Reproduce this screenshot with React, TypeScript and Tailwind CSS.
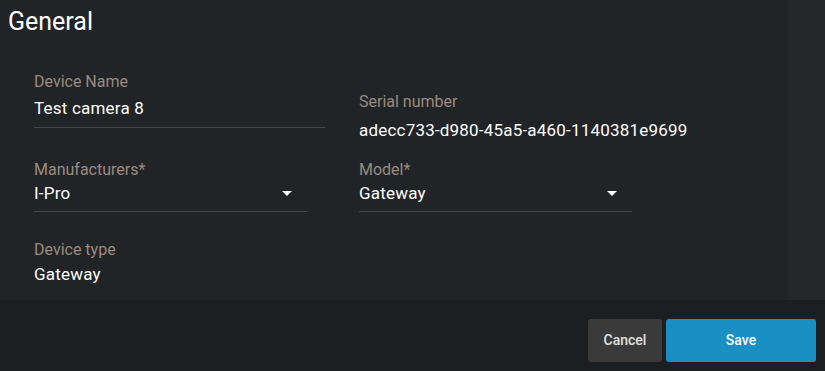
import React from "react";

const Caret = () => (
  <svg width="10" height="5" viewBox="0 0 10 5" className="shrink-0">
    <path d="M0 0 L10 0 L5 5 Z" fill="#ffffff" />
  </svg>
);

const labelCls = "text-[16px] leading-[20px] text-[#9a8a80] h-[20px] whitespace-nowrap";
const valueCls = "text-[17px] leading-[24px] tracking-[0.2px] text-white h-[24px] whitespace-nowrap";

export default function App() {
  return (
    <div
      className="w-[825px] h-[371px] flex flex-col overflow-hidden"
      style={{ fontFamily: "Roboto, 'Liberation Sans', sans-serif" }}
    >
      <div className="h-[300px] flex">
        <div className="flex-1 bg-[#212427] flex flex-col">
          <div className="pl-[8px] pt-[6px] text-[25px] leading-[32px] text-white">General</div>
          <div className="flex pl-[34px]">
            <div className="w-[291px] flex flex-col">
              <div className="mt-[34px] flex flex-col border-b border-[#44474a] pb-[7px]">
                <div className={labelCls}>Device Name</div>
                <div className={`mt-[4px] ${valueCls}`}>Test camera 8</div>
              </div>
              <div className="mt-[32px] w-[273px] flex flex-col border-b border-[#44474a] pb-[6px]">
                <div className={labelCls}>Manufacturers*</div>
                <div className="mt-[1px] flex items-center justify-between pr-[15px]">
                  <span className={valueCls}>I-Pro</span>
                  <Caret />
                </div>
              </div>
              <div className="mt-[28px] flex flex-col">
                <div className={labelCls}>Device type</div>
                <div className={`mt-[2px] ${valueCls}`}>Gateway</div>
              </div>
            </div>
            <div className="ml-[34px] w-[273px] flex flex-col">
              <div className="mt-[54px] flex flex-col">
                <div className={labelCls}>Serial number</div>
                <div className={`mt-[6px] ${valueCls}`}>adecc733-d980-45a5-a460-1140381e9699</div>
              </div>
              <div className="mt-[18px] flex flex-col border-b border-[#44474a] pb-[6px]">
                <div className={labelCls}>Model*</div>
                <div className="mt-[1px] flex items-center justify-between pr-[15px]">
                  <span className={valueCls}>Gateway</span>
                  <Caret />
                </div>
              </div>
            </div>
          </div>
        </div>
        <div className="w-[37px] bg-[#25282b]" />
      </div>
      <div className="flex-1 bg-[#1c1f21] flex justify-end items-start pt-[19px] pr-[9px] gap-[4px]">
        <button className="w-[74px] h-[43px] rounded-[3px] bg-[#3a3a3a] text-[#e0e0e0] text-[14px] font-medium">
          Cancel
        </button>
        <button className="w-[150px] h-[43px] rounded-[3px] bg-[#1a8fc2] text-white text-[14px] font-medium">
          Save
        </button>
      </div>
    </div>
  );
}
